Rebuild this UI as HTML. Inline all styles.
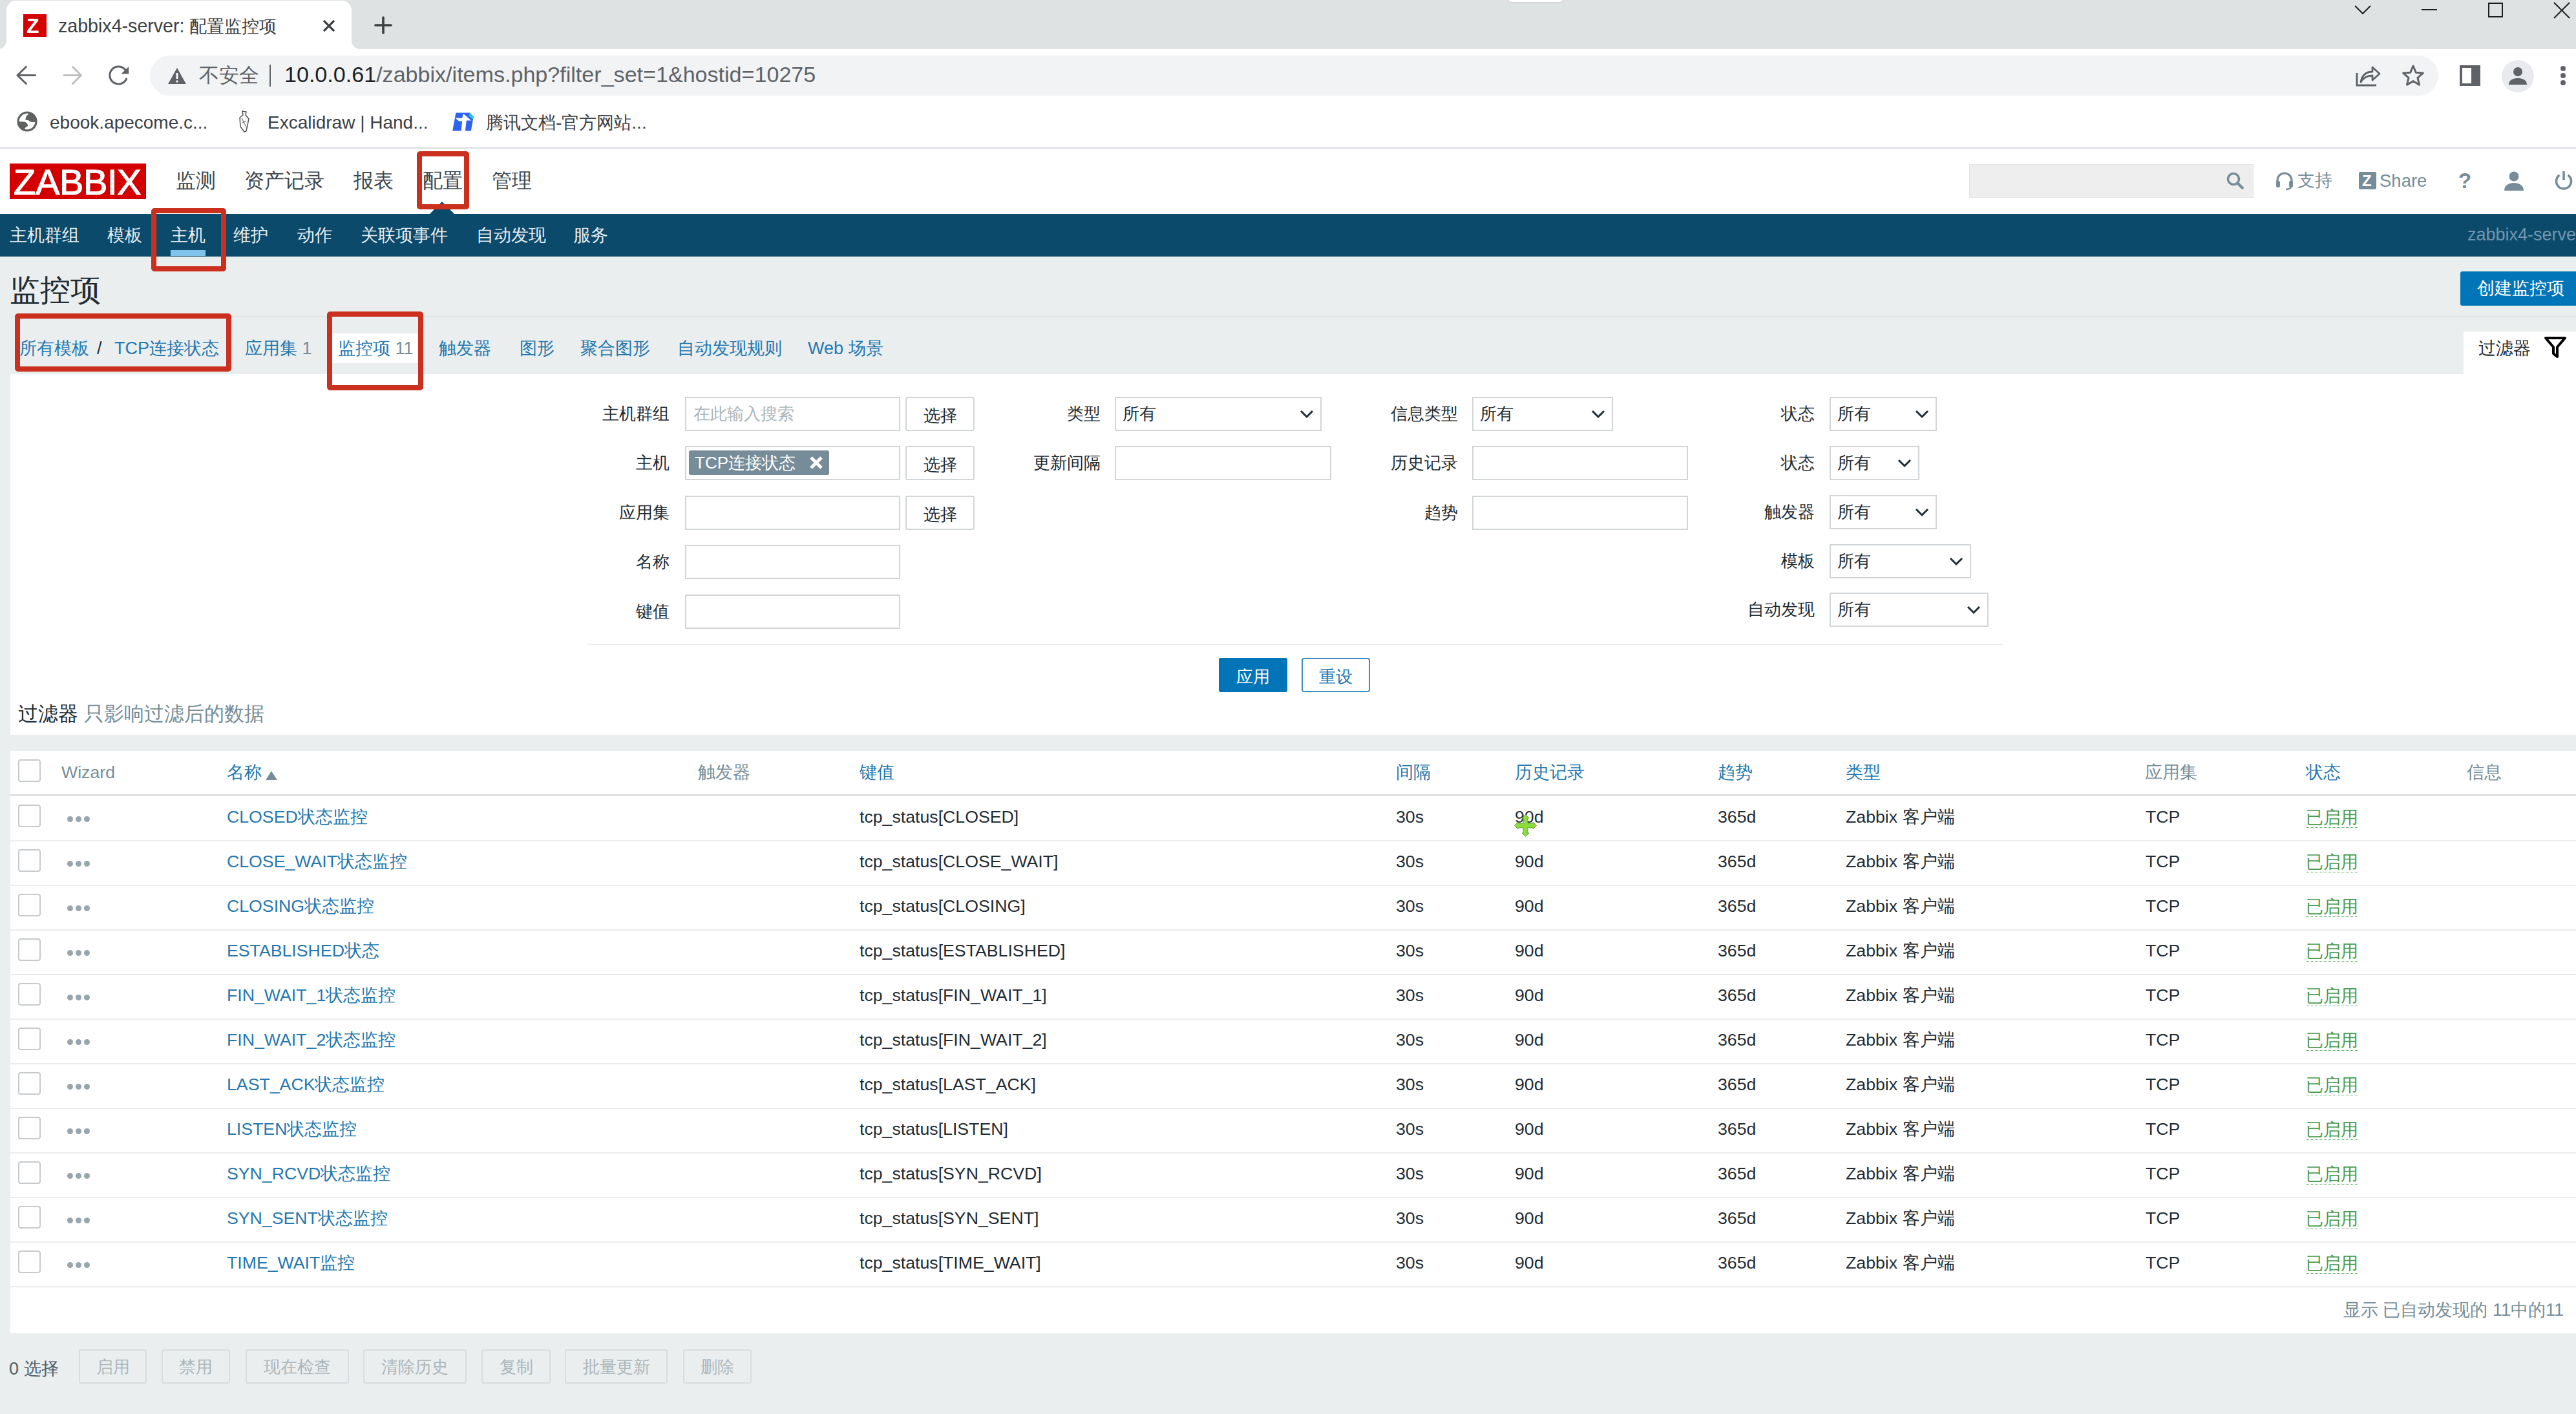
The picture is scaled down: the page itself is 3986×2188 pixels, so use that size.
<!DOCTYPE html>
<html><head><meta charset="utf-8">
<style>
*{box-sizing:border-box;margin:0;padding:0}
html,body{width:3986px;height:2188px;overflow:hidden;background:#eaeeef}
body{position:relative;font-family:"Liberation Sans",sans-serif;color:#1f2c33}
.a{position:absolute}
.t{position:absolute;white-space:nowrap;line-height:1}
.rb{position:absolute;border:8px solid #cb2f1e;border-radius:5px}
/* chrome */
#tabbar{left:0;top:0;width:3986px;height:76px;background:#dfe2e3}
#tab{left:10px;top:1px;width:534px;height:75px;background:#fff;border-radius:15px 15px 0 0}
#toolbar{left:0;top:76px;width:3986px;height:154px;background:#fff;border-bottom:2px solid #dadce0}
#omni{left:232px;top:86px;width:3541px;height:62px;background:#f1f3f4;border-radius:31px}
/* zabbix header */
#zhead{left:0;top:230px;width:3986px;height:101px;background:#fff}
#subnav{left:0;top:331px;width:3986px;height:66px;background:#0b4a6b}
.sn{color:#e6edf1;font-size:27px}
.mn{color:#3a464d;font-size:31px}
.lnk{color:#2578b0}
.grey{color:#768d99}
.panel{position:absolute;background:#fff}
.inp{position:absolute;background:#fff;border:2px solid #d2d5d7;height:53px}
.btnw{position:absolute;background:#fff;border:2px solid #d2d5d7;border-radius:3px;height:53px;font-size:26px;line-height:54px;text-align:center;color:#1f2c33}
.sel{position:absolute;background:#fff;border:2px solid #d2d5d7;height:53px;font-size:26px;line-height:49px;padding-left:10px;color:#1f2c33}
.lbl{position:absolute;font-size:26px;line-height:26px;text-align:right;white-space:nowrap;color:#1f2c33}
.cb{position:absolute;width:35px;height:35px;border:2px solid #c6cacc;border-radius:4px;background:#fff}
.rowline{position:absolute;left:16px;width:3970px;height:2px;background:#ececec}
.cell{position:absolute;font-size:26.7px;line-height:26px;white-space:nowrap}
.dots{position:absolute;width:36px;height:10px}
.dots i{position:absolute;top:0;width:9px;height:9px;border-radius:50%;background:#97a5ad}
.actb{position:absolute;top:2088px;height:53px;border:2px solid #d9dddf;border-radius:3px;font-size:26px;line-height:51px;text-align:center;color:#aeb6ba;background:transparent}
</style></head><body>
<!-- ============ CHROME ============ -->
<div class="a" id="tabbar"></div>
<div class="a" style="left:0;top:62px;width:570px;height:14px;background:#fff"></div>
<div class="a" style="left:-20px;top:30px;width:30px;height:46px;background:#dfe2e3;border-bottom-right-radius:13px"></div>
<div class="a" style="left:544px;top:30px;width:60px;height:46px;background:#dfe2e3;border-bottom-left-radius:13px"></div>
<div class="a" id="tab"></div>
<div class="a" id="toolbar"></div>
<div class="a" id="omni"></div>


<!-- favicon + title -->
<div class="a" style="left:36px;top:22px;width:36px;height:35px;background:#d40000"></div>
<div class="t" style="left:41px;top:25px;font-size:32px;font-weight:bold;color:#fff;line-height:30px">Z</div>
<div class="t" style="left:90px;top:25px;font-size:28.6px;line-height:30px;color:#3c4043">zabbix4-server: <span style="font-size:26.5px">配置监控项</span></div>
<svg class="a" style="left:498px;top:29px" width="22" height="22" viewBox="0 0 22 22"><path d="M3 3L19 19M19 3L3 19" stroke="#3c4043" stroke-width="3.2"/></svg>
<svg class="a" style="left:578px;top:24px" width="30" height="30" viewBox="0 0 30 30"><path d="M15 3V27M3 15H27" stroke="#3c4043" stroke-width="3.6" stroke-linecap="round"/></svg>
<!-- window controls -->
<svg class="a" style="left:3642px;top:6px" width="28" height="18" viewBox="0 0 28 18"><path d="M2 3L14 15L26 3" stroke="#1f1f1f" stroke-width="2" fill="none"/></svg>
<div class="a" style="left:3747px;top:14px;width:24px;height:2px;background:#1f1f1f"></div>
<div class="a" style="left:3850px;top:4px;width:23px;height:23px;border:2px solid #1f1f1f"></div>
<svg class="a" style="left:3950px;top:2px" width="28" height="28" viewBox="0 0 28 28"><path d="M2 2L26 26M26 2L2 26" stroke="#1f1f1f" stroke-width="2"/></svg>
<div class="a" style="left:2334px;top:-6px;width:84px;height:9px;background:#fff;border-radius:4px;box-shadow:0 0 2px #999"></div>
<!-- toolbar icons -->
<svg class="a" style="left:20px;top:96px" width="40" height="40" viewBox="0 0 40 40"><path d="M34.5 20.5H7M20.4 7.5L7 20.5L20.4 33.5" stroke="#5f6368" stroke-width="3.1" fill="none" stroke-linecap="round" stroke-linejoin="round"/></svg>
<svg class="a" style="left:92px;top:96px" width="40" height="40" viewBox="0 0 40 40"><path d="M7 20.5H33M20.5 7.5L33.5 20.5L20.5 33.5" stroke="#bdbfc1" stroke-width="3.1" fill="none" stroke-linecap="round" stroke-linejoin="round"/></svg>
<svg class="a" style="left:150px;top:90px" width="60" height="50" viewBox="0 0 60 50"><path d="M43.4 17.5A13.5 13.5 0 1 0 45.6 32.2" stroke="#5f6368" stroke-width="3.1" fill="none" stroke-linecap="round"/><path d="M49.2 13V24.2H37.4Z" fill="#5f6368"/></svg>
<svg class="a" style="left:259px;top:104px" width="30" height="27" viewBox="0 0 30 27"><path d="M15 1L29 26H1Z" fill="#5f6368"/><path d="M15 9V18M15 20.5V23.5" stroke="#fff" stroke-width="2.8"/></svg>
<div class="t" style="left:308px;top:101px;font-size:31px;line-height:32px;color:#5f6368">不安全</div>
<div class="a" style="left:417px;top:100px;width:2px;height:34px;background:#5f6368"></div>
<div class="t" style="left:440px;top:98px;font-size:34.1px;line-height:34px;color:#5f6368"><span style="color:#202124">10.0.0.61</span>/zabbix/items.php?filter_set=1&amp;hostid=10275</div>
<!-- share, star -->
<svg class="a" style="left:3644px;top:99px" width="40" height="36" viewBox="0 0 40 36"><path d="M3 14V33H33" stroke="#5f6368" stroke-width="3" fill="none"/><path d="M9 28C11 17 18 12 27 12V5L38 15L27 25V18C19 18 13 21 9 28Z" stroke="#5f6368" stroke-width="2.8" fill="none" stroke-linejoin="round"/></svg>
<svg class="a" style="left:3716px;top:99px" width="36" height="36" viewBox="0 0 36 36"><path d="M18 3L22.3 13.2L33.3 14.1L25 21.4L27.5 32.2L18 26.5L8.5 32.2L11 21.4L2.7 14.1L13.7 13.2Z" stroke="#5f6368" stroke-width="3" fill="none" stroke-linejoin="round"/></svg>
<!-- sidebar -->
<div class="a" style="left:3806px;top:101px;width:32px;height:32px;border:4px solid #5f6368;border-right-width:14px"></div>
<!-- profile -->
<div class="a" style="left:3871px;top:93px;width:50px;height:50px;border-radius:50%;background:#e8eaed"></div>
<svg class="a" style="left:3871px;top:93px" width="50" height="50" viewBox="0 0 50 50"><circle cx="25" cy="18" r="7" fill="#5f6368"/><path d="M11 38C11 30 19 28 25 28C31 28 39 30 39 38Z" fill="#5f6368"/></svg>
<!-- kebab -->
<div class="a" style="left:3962px;top:102px;width:8px;height:8px;border-radius:50%;background:#5f6368"></div>
<div class="a" style="left:3962px;top:113px;width:8px;height:8px;border-radius:50%;background:#5f6368"></div>
<div class="a" style="left:3962px;top:124px;width:8px;height:8px;border-radius:50%;background:#5f6368"></div>
<!-- bookmarks -->
<svg class="a" style="left:25.5px;top:172.4px" width="32" height="32" viewBox="0 0 32 32"><circle cx="16" cy="16" r="15.6" fill="#606262"/><path d="M3.6 16A12.4 12.4 0 0 1 17.5 3.7L17.6 5.6C15.5 6.5 14 8.2 13.3 13.3C15.5 14 18.5 14.2 19.5 15.2C20.2 16.3 21 17 28.3 17A12.4 12.4 0 0 1 12.3 27.8C12.3 26 14 24.5 17 23.2C17 20.5 16.5 18.6 12 16.5Z" fill="#fff"/></svg>
<div class="t" style="left:77px;top:175px;font-size:28px;line-height:30px;color:#3c4043">ebook.apecome.c...</div>
<svg class="a" style="left:366px;top:170px" width="24" height="36" viewBox="0 0 24 36"><path d="M9 2L15 3L14 8L19 14L15 33L12 34L6 26L5 12L10 8Z" stroke="#555" stroke-width="1.5" fill="#fafafa"/><path d="M8 13L16 28M9 20L15 17" stroke="#777" stroke-width="1.2"/></svg>
<div class="t" style="left:414px;top:175px;font-size:28px;line-height:30px;color:#3c4043">Excalidraw | Hand...</div>
<svg class="a" style="left:699.5px;top:173.6px" width="33" height="30" viewBox="0 0 33 30"><path d="M5.4 0.4H27L32.7 6.6L28.8 28.6H0.2Z" fill="#2d63f0"/><path d="M16.8 1.8L29.2 12.6H21.8L19.8 29H13.5L15.2 13.6H10.2L4.6 8.8H15.2Z" fill="#fff"/><path d="M27 0.4L32.7 6.6L31.8 11L25.5 5.5Z" fill="#22c4f0"/></svg>
<div class="t" style="left:752px;top:175px;font-size:28px;line-height:30px;color:#3c4043"><span style="font-size:27px">腾讯文档</span>-<span style="font-size:27px">官方网站</span>...</div>

<!-- ============ ZABBIX HEADER ============ -->
<div class="a" id="zhead"></div>
<div class="a" id="subnav"></div>


<!-- logo -->
<div class="a" style="left:15px;top:253px;width:211px;height:55px;background:#d40000"></div>
<div class="t" style="left:21px;top:259px;font-size:56px;line-height:46px;color:#fff;letter-spacing:-0.3px;-webkit-text-stroke:1.2px #fff">ZABBIX</div>
<div class="t mn" style="left:272px;top:264px">监测</div>
<div class="t mn" style="left:378px;top:264px">资产记录</div>
<div class="t mn" style="left:547px;top:264px">报表</div>
<div class="t mn" style="left:654px;top:264px">配置</div>
<div class="t mn" style="left:761px;top:264px">管理</div>
<svg class="a" style="left:664px;top:312px" width="40" height="20" viewBox="0 0 40 20"><path d="M0 20L20 0L40 20Z" fill="#0b4a6b"/></svg>
<!-- search -->
<div class="a" style="left:3047px;top:254px;width:440px;height:52px;background:#eeeeee;border:1px solid #e4e4e4"></div>
<svg class="a" style="left:3444px;top:265px" width="32" height="30" viewBox="0 0 32 30"><circle cx="12" cy="12" r="8.5" stroke="#768d99" stroke-width="3.5" fill="none"/><path d="M18 18L27 27" stroke="#768d99" stroke-width="4.2"/></svg>
<svg class="a" style="left:3520px;top:265px" width="30" height="30" viewBox="0 0 30 30"><path d="M4 19V14A11 11 0 0 1 26 14V19" stroke="#768d99" stroke-width="3.2" fill="none"/><rect x="2" y="15" width="6" height="10" rx="2" fill="#768d99"/><rect x="22" y="15" width="6" height="10" rx="2" fill="#768d99"/><path d="M25 24C24 27 21 28 17 28" stroke="#768d99" stroke-width="2.4" fill="none"/></svg>
<div class="t" style="left:3555px;top:266px;font-size:27px;color:#768d99">支持</div>
<div class="a" style="left:3650px;top:266px;width:27px;height:27px;background:#768d99;border-radius:2px"></div>
<div class="t" style="left:3655px;top:268px;font-size:24px;font-weight:bold;color:#fff">Z</div>
<div class="t" style="left:3682px;top:265px;font-size:27.5px;line-height:30px;color:#768d99">Share</div>
<div class="t" style="left:3804px;top:264px;font-size:33px;line-height:32px;font-weight:bold;color:#768d99">?</div>
<svg class="a" style="left:3873px;top:264px" width="34" height="32" viewBox="0 0 34 32"><circle cx="17" cy="9" r="7.5" fill="#768d99"/><path d="M2 31C2 22 10 19 17 19C24 19 32 22 32 31Z" fill="#768d99"/></svg>
<svg class="a" style="left:3951px;top:264px" width="32" height="30" viewBox="0 0 32 30"><path d="M9.5 7A11.5 11.5 0 1 0 22.5 7" stroke="#768d99" stroke-width="3.6" fill="none"/><path d="M16 1V15" stroke="#768d99" stroke-width="3.6"/></svg>
<!-- subnav -->
<div class="t sn" style="left:15px;top:351px">主机群组</div>
<div class="t sn" style="left:166px;top:351px">模板</div>
<div class="t sn" style="left:264px;top:351px">主机</div>
<div class="t sn" style="left:361px;top:351px">维护</div>
<div class="t sn" style="left:460px;top:351px">动作</div>
<div class="t sn" style="left:558px;top:351px">关联项事件</div>
<div class="t sn" style="left:737px;top:351px">自动发现</div>
<div class="t sn" style="left:887px;top:351px">服务</div>
<div class="a" style="left:264px;top:387px;width:54px;height:9px;background:#80c4ec"></div>
<div class="t" style="left:3818px;top:350px;font-size:27px;color:#7097af">zabbix4-server</div>

<!-- ============ PAGE ============ -->
<div class="t" style="left:15px;top:425px;font-size:47px;color:#1f2c33">监控项</div>
<div class="a" style="left:16px;top:489px;width:3970px;height:2px;background:#dfe4e7"></div>
<div class="a" style="left:3807px;top:420px;width:190px;height:53px;background:#0275b8;border-radius:3px"></div>
<div class="t" style="left:3833px;top:433px;font-size:27px;color:#fff">创建监控项</div>
<!-- tabs -->
<div class="a" style="left:514px;top:516px;width:133px;height:46px;background:#fff"></div>
<div class="t lnk" style="left:30px;top:526px;font-size:27px">所有模板</div>
<div class="t" style="left:150px;top:526px;font-size:27px;color:#1f2c33">/</div>
<div class="t lnk" style="left:177px;top:526px;font-size:27px">TCP连接状态</div>
<div class="t lnk" style="left:379px;top:526px;font-size:27px">应用集 <span class="grey">1</span></div>
<div class="t lnk" style="left:523px;top:526px;font-size:27px">监控项 <span class="grey">11</span></div>
<div class="t lnk" style="left:679px;top:526px;font-size:27px">触发器</div>
<div class="t lnk" style="left:804px;top:526px;font-size:27px">图形</div>
<div class="t lnk" style="left:898px;top:526px;font-size:27px">聚合图形</div>
<div class="t lnk" style="left:1048px;top:526px;font-size:27px">自动发现规则</div>
<div class="t lnk" style="left:1250px;top:526px;font-size:27px">Web 场景</div>
<!-- filter tab -->
<div class="a" style="left:3812px;top:513px;width:174px;height:70px;background:#fff"></div>
<div class="t" style="left:3835px;top:526px;font-size:27px;color:#1f2c33">过滤器</div>
<svg class="a" style="left:3936px;top:520px" width="36" height="36" viewBox="0 0 36 36"><path d="M3 3H33L21 17V32L15 27V17Z" stroke="#000" stroke-width="4" fill="none" stroke-linejoin="round"/></svg>

<!-- filter panel -->
<div class="panel" style="left:16px;top:579px;width:3970px;height:558px"></div>
<div class="lbl" style="left:636px;width:400px;top:627px">主机群组</div>
<div class="inp" style="left:1060px;top:614px;width:333px"></div>
<div class="lbl" style="left:636px;width:400px;top:703px">主机</div>
<div class="inp" style="left:1060px;top:690px;width:333px"></div>
<div class="lbl" style="left:636px;width:400px;top:780px">应用集</div>
<div class="inp" style="left:1060px;top:767px;width:333px"></div>
<div class="lbl" style="left:636px;width:400px;top:856px">名称</div>
<div class="inp" style="left:1060px;top:843px;width:333px"></div>
<div class="lbl" style="left:636px;width:400px;top:933px">键值</div>
<div class="inp" style="left:1060px;top:920px;width:333px"></div>
<div class="btnw" style="left:1401px;top:614px;width:107px">选择</div>
<div class="btnw" style="left:1401px;top:690px;width:107px">选择</div>
<div class="btnw" style="left:1401px;top:767px;width:107px">选择</div>
<div class="t" style="left:1073px;top:627px;font-size:26px;color:#acb6bb">在此输入搜索</div>
<div class="a" style="left:1066px;top:697px;width:217px;height:38px;background:#768d99;border-radius:3px"></div>
<div class="t" style="left:1075px;top:703px;font-size:26px;color:#fff">TCP连接状态</div>
<svg class="a" style="left:1251px;top:704px" width="24" height="24" viewBox="0 0 24 24"><path d="M4 4L20 20M20 4L4 20" stroke="#fff" stroke-width="5"/></svg>
<div class="lbl" style="left:1303px;width:400px;top:627px">类型</div>
<div class="sel" style="left:1725px;top:614px;width:320px">所有<svg style="position:absolute;right:9px;top:17px" width="24" height="16" viewBox="0 0 24 16"><path d="M3 3L12 12L21 3" stroke="#1f2c33" stroke-width="3" fill="none"/></svg></div>
<div class="lbl" style="left:1303px;width:400px;top:703px">更新间隔</div>
<div class="inp" style="left:1725px;top:690px;width:335px"></div>
<div class="lbl" style="left:1856px;width:400px;top:627px">信息类型</div>
<div class="sel" style="left:2278px;top:614px;width:218px">所有<svg style="position:absolute;right:9px;top:17px" width="24" height="16" viewBox="0 0 24 16"><path d="M3 3L12 12L21 3" stroke="#1f2c33" stroke-width="3" fill="none"/></svg></div>
<div class="lbl" style="left:1856px;width:400px;top:703px">历史记录</div>
<div class="inp" style="left:2278px;top:690px;width:334px"></div>
<div class="lbl" style="left:1856px;width:400px;top:780px">趋势</div>
<div class="inp" style="left:2278px;top:767px;width:334px"></div>
<div class="lbl" style="left:2408px;width:400px;top:627px">状态</div>
<div class="sel" style="left:2831px;top:614px;width:166px">所有<svg style="position:absolute;right:9px;top:17px" width="24" height="16" viewBox="0 0 24 16"><path d="M3 3L12 12L21 3" stroke="#1f2c33" stroke-width="3" fill="none"/></svg></div>
<div class="lbl" style="left:2408px;width:400px;top:703px">状态</div>
<div class="sel" style="left:2831px;top:690px;width:139px">所有<svg style="position:absolute;right:9px;top:17px" width="24" height="16" viewBox="0 0 24 16"><path d="M3 3L12 12L21 3" stroke="#1f2c33" stroke-width="3" fill="none"/></svg></div>
<div class="lbl" style="left:2408px;width:400px;top:779px">触发器</div>
<div class="sel" style="left:2831px;top:766px;width:166px">所有<svg style="position:absolute;right:9px;top:17px" width="24" height="16" viewBox="0 0 24 16"><path d="M3 3L12 12L21 3" stroke="#1f2c33" stroke-width="3" fill="none"/></svg></div>
<div class="lbl" style="left:2408px;width:400px;top:855px">模板</div>
<div class="sel" style="left:2831px;top:842px;width:219px">所有<svg style="position:absolute;right:9px;top:17px" width="24" height="16" viewBox="0 0 24 16"><path d="M3 3L12 12L21 3" stroke="#1f2c33" stroke-width="3" fill="none"/></svg></div>
<div class="lbl" style="left:2408px;width:400px;top:930px">自动发现</div>
<div class="sel" style="left:2831px;top:917px;width:246px">所有<svg style="position:absolute;right:9px;top:17px" width="24" height="16" viewBox="0 0 24 16"><path d="M3 3L12 12L21 3" stroke="#1f2c33" stroke-width="3" fill="none"/></svg></div>
<div class="a" style="left:908px;top:996px;width:2191px;height:2px;background:#ebeef0"></div>
<div class="a" style="left:1886px;top:1018px;width:106px;height:53px;background:#0275b8;border-radius:3px;color:#fff;font-size:26px;line-height:58px;text-align:center">应用</div>
<div class="a" style="left:2014px;top:1018px;width:106px;height:53px;background:#fff;border:2px solid #3f8cc4;border-radius:4px;color:#1a78b5;font-size:26px;line-height:54px;text-align:center">重设</div>
<div class="t" style="left:28px;top:1089px;font-size:31px;color:#1f2c33">过滤器 <span class="grey">只影响过滤后的数据</span></div>
<!-- table panel -->
<div class="panel" style="left:16px;top:1162px;width:3970px;height:901px"></div>
<div class="cb" style="left:28px;top:1175px"></div>
<div class="cell grey" style="left:95px;top:1182px">Wizard</div>
<div class="cell lnk" style="left:351px;top:1182px">名称</div>
<div class="cell grey" style="left:1080px;top:1182px">触发器</div>
<div class="cell lnk" style="left:1330px;top:1182px">键值</div>
<div class="cell lnk" style="left:2160px;top:1182px">间隔</div>
<div class="cell lnk" style="left:2344px;top:1182px">历史记录</div>
<div class="cell lnk" style="left:2658px;top:1182px">趋势</div>
<div class="cell lnk" style="left:2856px;top:1182px">类型</div>
<div class="cell grey" style="left:3319px;top:1182px">应用集</div>
<div class="cell lnk" style="left:3568px;top:1182px">状态</div>
<div class="cell grey" style="left:3817px;top:1182px">信息</div>
<svg class="a" style="left:410px;top:1192px" width="20" height="16" viewBox="0 0 20 16"><path d="M1 15L10 1L19 15Z" fill="#768d99"/></svg>
<div class="a" style="left:16px;top:1229px;width:3970px;height:3px;background:#dcdedf"></div>
<div class="cb" style="left:28px;top:1245px"></div>
<div class="dots" style="left:104px;top:1263px"><i style="left:0"></i><i style="left:13px"></i><i style="left:26px"></i></div>
<div class="cell lnk" style="left:351px;top:1251px">CLOSED状态监控</div>
<div class="cell" style="left:1330px;top:1251px">tcp_status[CLOSED]</div>
<div class="cell" style="left:2160px;top:1251px">30s</div>
<div class="cell" style="left:2344px;top:1251px">90d</div>
<div class="cell" style="left:2658px;top:1251px">365d</div>
<div class="cell" style="left:2856px;top:1251px">Zabbix 客户端</div>
<div class="cell" style="left:3320px;top:1251px">TCP</div>
<div class="cell" style="left:3568px;top:1251px;color:#4a9e50;border-bottom:1px dotted #4a9e50;line-height:29px">已启用</div>
<div class="rowline" style="top:1300px"></div>
<div class="cb" style="left:28px;top:1314px"></div>
<div class="dots" style="left:104px;top:1332px"><i style="left:0"></i><i style="left:13px"></i><i style="left:26px"></i></div>
<div class="cell lnk" style="left:351px;top:1320px">CLOSE_WAIT状态监控</div>
<div class="cell" style="left:1330px;top:1320px">tcp_status[CLOSE_WAIT]</div>
<div class="cell" style="left:2160px;top:1320px">30s</div>
<div class="cell" style="left:2344px;top:1320px">90d</div>
<div class="cell" style="left:2658px;top:1320px">365d</div>
<div class="cell" style="left:2856px;top:1320px">Zabbix 客户端</div>
<div class="cell" style="left:3320px;top:1320px">TCP</div>
<div class="cell" style="left:3568px;top:1320px;color:#4a9e50;border-bottom:1px dotted #4a9e50;line-height:29px">已启用</div>
<div class="rowline" style="top:1369px"></div>
<div class="cb" style="left:28px;top:1383px"></div>
<div class="dots" style="left:104px;top:1401px"><i style="left:0"></i><i style="left:13px"></i><i style="left:26px"></i></div>
<div class="cell lnk" style="left:351px;top:1389px">CLOSING状态监控</div>
<div class="cell" style="left:1330px;top:1389px">tcp_status[CLOSING]</div>
<div class="cell" style="left:2160px;top:1389px">30s</div>
<div class="cell" style="left:2344px;top:1389px">90d</div>
<div class="cell" style="left:2658px;top:1389px">365d</div>
<div class="cell" style="left:2856px;top:1389px">Zabbix 客户端</div>
<div class="cell" style="left:3320px;top:1389px">TCP</div>
<div class="cell" style="left:3568px;top:1389px;color:#4a9e50;border-bottom:1px dotted #4a9e50;line-height:29px">已启用</div>
<div class="rowline" style="top:1438px"></div>
<div class="cb" style="left:28px;top:1452px"></div>
<div class="dots" style="left:104px;top:1470px"><i style="left:0"></i><i style="left:13px"></i><i style="left:26px"></i></div>
<div class="cell lnk" style="left:351px;top:1458px">ESTABLISHED状态</div>
<div class="cell" style="left:1330px;top:1458px">tcp_status[ESTABLISHED]</div>
<div class="cell" style="left:2160px;top:1458px">30s</div>
<div class="cell" style="left:2344px;top:1458px">90d</div>
<div class="cell" style="left:2658px;top:1458px">365d</div>
<div class="cell" style="left:2856px;top:1458px">Zabbix 客户端</div>
<div class="cell" style="left:3320px;top:1458px">TCP</div>
<div class="cell" style="left:3568px;top:1458px;color:#4a9e50;border-bottom:1px dotted #4a9e50;line-height:29px">已启用</div>
<div class="rowline" style="top:1507px"></div>
<div class="cb" style="left:28px;top:1521px"></div>
<div class="dots" style="left:104px;top:1539px"><i style="left:0"></i><i style="left:13px"></i><i style="left:26px"></i></div>
<div class="cell lnk" style="left:351px;top:1527px">FIN_WAIT_1状态监控</div>
<div class="cell" style="left:1330px;top:1527px">tcp_status[FIN_WAIT_1]</div>
<div class="cell" style="left:2160px;top:1527px">30s</div>
<div class="cell" style="left:2344px;top:1527px">90d</div>
<div class="cell" style="left:2658px;top:1527px">365d</div>
<div class="cell" style="left:2856px;top:1527px">Zabbix 客户端</div>
<div class="cell" style="left:3320px;top:1527px">TCP</div>
<div class="cell" style="left:3568px;top:1527px;color:#4a9e50;border-bottom:1px dotted #4a9e50;line-height:29px">已启用</div>
<div class="rowline" style="top:1576px"></div>
<div class="cb" style="left:28px;top:1590px"></div>
<div class="dots" style="left:104px;top:1608px"><i style="left:0"></i><i style="left:13px"></i><i style="left:26px"></i></div>
<div class="cell lnk" style="left:351px;top:1596px">FIN_WAIT_2状态监控</div>
<div class="cell" style="left:1330px;top:1596px">tcp_status[FIN_WAIT_2]</div>
<div class="cell" style="left:2160px;top:1596px">30s</div>
<div class="cell" style="left:2344px;top:1596px">90d</div>
<div class="cell" style="left:2658px;top:1596px">365d</div>
<div class="cell" style="left:2856px;top:1596px">Zabbix 客户端</div>
<div class="cell" style="left:3320px;top:1596px">TCP</div>
<div class="cell" style="left:3568px;top:1596px;color:#4a9e50;border-bottom:1px dotted #4a9e50;line-height:29px">已启用</div>
<div class="rowline" style="top:1645px"></div>
<div class="cb" style="left:28px;top:1659px"></div>
<div class="dots" style="left:104px;top:1677px"><i style="left:0"></i><i style="left:13px"></i><i style="left:26px"></i></div>
<div class="cell lnk" style="left:351px;top:1665px">LAST_ACK状态监控</div>
<div class="cell" style="left:1330px;top:1665px">tcp_status[LAST_ACK]</div>
<div class="cell" style="left:2160px;top:1665px">30s</div>
<div class="cell" style="left:2344px;top:1665px">90d</div>
<div class="cell" style="left:2658px;top:1665px">365d</div>
<div class="cell" style="left:2856px;top:1665px">Zabbix 客户端</div>
<div class="cell" style="left:3320px;top:1665px">TCP</div>
<div class="cell" style="left:3568px;top:1665px;color:#4a9e50;border-bottom:1px dotted #4a9e50;line-height:29px">已启用</div>
<div class="rowline" style="top:1714px"></div>
<div class="cb" style="left:28px;top:1728px"></div>
<div class="dots" style="left:104px;top:1746px"><i style="left:0"></i><i style="left:13px"></i><i style="left:26px"></i></div>
<div class="cell lnk" style="left:351px;top:1734px">LISTEN状态监控</div>
<div class="cell" style="left:1330px;top:1734px">tcp_status[LISTEN]</div>
<div class="cell" style="left:2160px;top:1734px">30s</div>
<div class="cell" style="left:2344px;top:1734px">90d</div>
<div class="cell" style="left:2658px;top:1734px">365d</div>
<div class="cell" style="left:2856px;top:1734px">Zabbix 客户端</div>
<div class="cell" style="left:3320px;top:1734px">TCP</div>
<div class="cell" style="left:3568px;top:1734px;color:#4a9e50;border-bottom:1px dotted #4a9e50;line-height:29px">已启用</div>
<div class="rowline" style="top:1783px"></div>
<div class="cb" style="left:28px;top:1797px"></div>
<div class="dots" style="left:104px;top:1815px"><i style="left:0"></i><i style="left:13px"></i><i style="left:26px"></i></div>
<div class="cell lnk" style="left:351px;top:1803px">SYN_RCVD状态监控</div>
<div class="cell" style="left:1330px;top:1803px">tcp_status[SYN_RCVD]</div>
<div class="cell" style="left:2160px;top:1803px">30s</div>
<div class="cell" style="left:2344px;top:1803px">90d</div>
<div class="cell" style="left:2658px;top:1803px">365d</div>
<div class="cell" style="left:2856px;top:1803px">Zabbix 客户端</div>
<div class="cell" style="left:3320px;top:1803px">TCP</div>
<div class="cell" style="left:3568px;top:1803px;color:#4a9e50;border-bottom:1px dotted #4a9e50;line-height:29px">已启用</div>
<div class="rowline" style="top:1852px"></div>
<div class="cb" style="left:28px;top:1866px"></div>
<div class="dots" style="left:104px;top:1884px"><i style="left:0"></i><i style="left:13px"></i><i style="left:26px"></i></div>
<div class="cell lnk" style="left:351px;top:1872px">SYN_SENT状态监控</div>
<div class="cell" style="left:1330px;top:1872px">tcp_status[SYN_SENT]</div>
<div class="cell" style="left:2160px;top:1872px">30s</div>
<div class="cell" style="left:2344px;top:1872px">90d</div>
<div class="cell" style="left:2658px;top:1872px">365d</div>
<div class="cell" style="left:2856px;top:1872px">Zabbix 客户端</div>
<div class="cell" style="left:3320px;top:1872px">TCP</div>
<div class="cell" style="left:3568px;top:1872px;color:#4a9e50;border-bottom:1px dotted #4a9e50;line-height:29px">已启用</div>
<div class="rowline" style="top:1921px"></div>
<div class="cb" style="left:28px;top:1935px"></div>
<div class="dots" style="left:104px;top:1953px"><i style="left:0"></i><i style="left:13px"></i><i style="left:26px"></i></div>
<div class="cell lnk" style="left:351px;top:1941px">TIME_WAIT监控</div>
<div class="cell" style="left:1330px;top:1941px">tcp_status[TIME_WAIT]</div>
<div class="cell" style="left:2160px;top:1941px">30s</div>
<div class="cell" style="left:2344px;top:1941px">90d</div>
<div class="cell" style="left:2658px;top:1941px">365d</div>
<div class="cell" style="left:2856px;top:1941px">Zabbix 客户端</div>
<div class="cell" style="left:3320px;top:1941px">TCP</div>
<div class="cell" style="left:3568px;top:1941px;color:#4a9e50;border-bottom:1px dotted #4a9e50;line-height:29px">已启用</div>
<div class="rowline" style="top:1990px"></div>
<div class="t grey" style="left:3500px;width:467px;text-align:right;top:2014px;font-size:27px">显示 已自动发现的 11中的11</div>
<svg class="a" style="left:2343px;top:1260px" width="35" height="35" viewBox="-0.5 -0.5 35 35"><path d="M17 0L22.5 5.5H20.4V13.6H28.5V11.5L34 17L28.5 22.5V20.4H20.4V28.5H22.5L17 34L11.5 28.5H13.6V20.4H5.5V22.5L0 17L5.5 11.5V13.6H13.6V5.5H11.5Z" fill="#8ddc3f" stroke="#63a82a" stroke-width="1"/></svg>
<div class="t" style="left:14px;top:2105px;font-size:27px;color:#4f5f68">0 选择</div>
<div class="actb" style="left:122px;width:105px">启用</div>
<div class="actb" style="left:250px;width:106px">禁用</div>
<div class="actb" style="left:380px;width:160px">现在检查</div>
<div class="actb" style="left:562px;width:160px">清除历史</div>
<div class="actb" style="left:745px;width:107px">复制</div>
<div class="actb" style="left:874px;width:159px">批量更新</div>
<div class="actb" style="left:1057px;width:106px">删除</div>
<div class="rb" style="left:645px;top:234px;width:81px;height:90px"></div>
<div class="rb" style="left:234px;top:322px;width:116px;height:98px"></div>
<div class="rb" style="left:23px;top:485px;width:335px;height:90px"></div>
<div class="rb" style="left:506px;top:482px;width:149px;height:122px"></div>
</body></html>
